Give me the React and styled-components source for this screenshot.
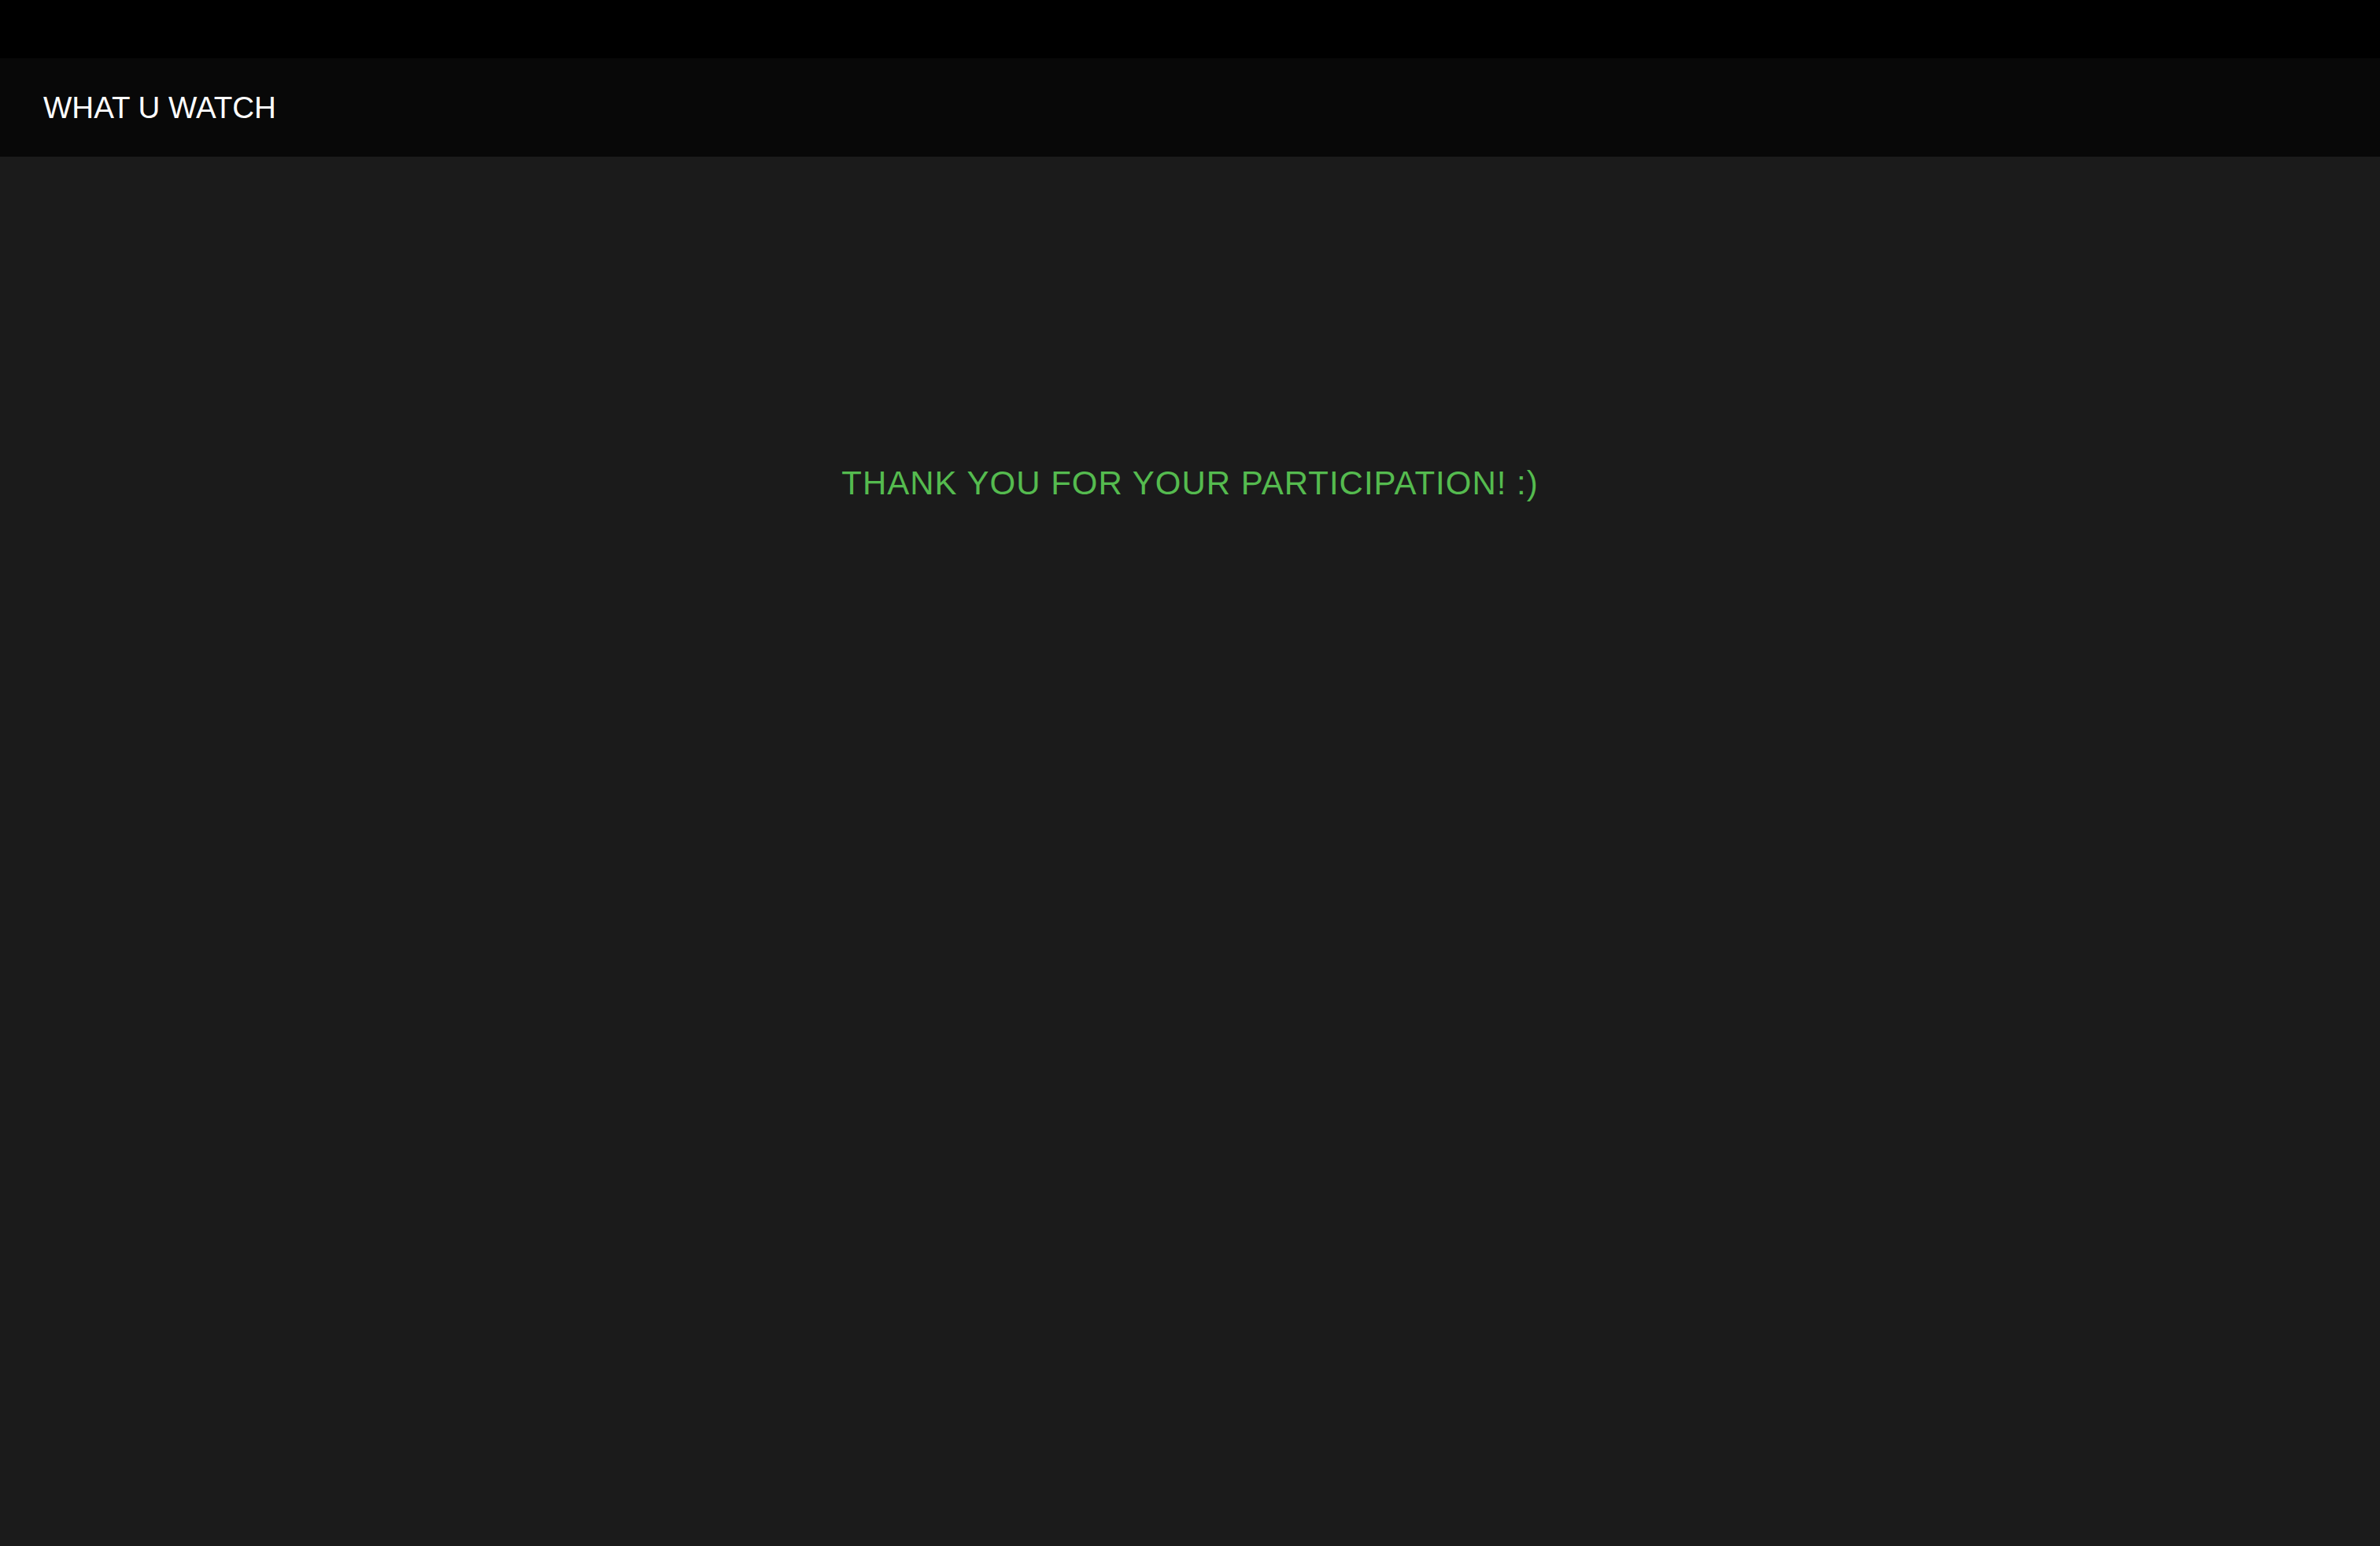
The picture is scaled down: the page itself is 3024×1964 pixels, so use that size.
import React from 'react';
import styled, { createGlobalStyle } from 'styled-components';

const GlobalStyle = createGlobalStyle`
    html, body {
        margin: 0;
        padding: 0;
        background-color: #1b1b1b;
    }
    body {
        font-family: "Liberation Sans", Arial, Helvetica, sans-serif;
    }
`;

const PageStyle = styled.div`
    display: flex;
    flex-direction: column;
    min-height: 100vh;
    background-color: #1b1b1b;
`;

const TopBarStyle = styled.div`
    height: 74px;
    background-color: #000;
`;

const HeaderStyle = styled.header`
    height: 125px;
    display: flex;
    align-items: center;
    padding-left: 55px;
    background-color: #080808;
`;

const LogoStyle = styled.div`
    font-size: 38.5px;
    color: #fff;
`;

const MainStyle = styled.main`
    flex: 1;
    display: flex;
    justify-content: center;
    padding-top: 391px;
`;

const ThanksStyle = styled.div`
    font-size: 42px;
    letter-spacing: 1px;
    color: #55bb4f;
    height: fit-content;
`;

const App = () => {
    return (
        <PageStyle>
            <GlobalStyle />
            <TopBarStyle />
            <HeaderStyle>
                <LogoStyle>WHAT U WATCH</LogoStyle>
            </HeaderStyle>
            <MainStyle>
                <ThanksStyle>THANK YOU FOR YOUR PARTICIPATION! :)</ThanksStyle>
            </MainStyle>
        </PageStyle>
    );
};

export default App;
